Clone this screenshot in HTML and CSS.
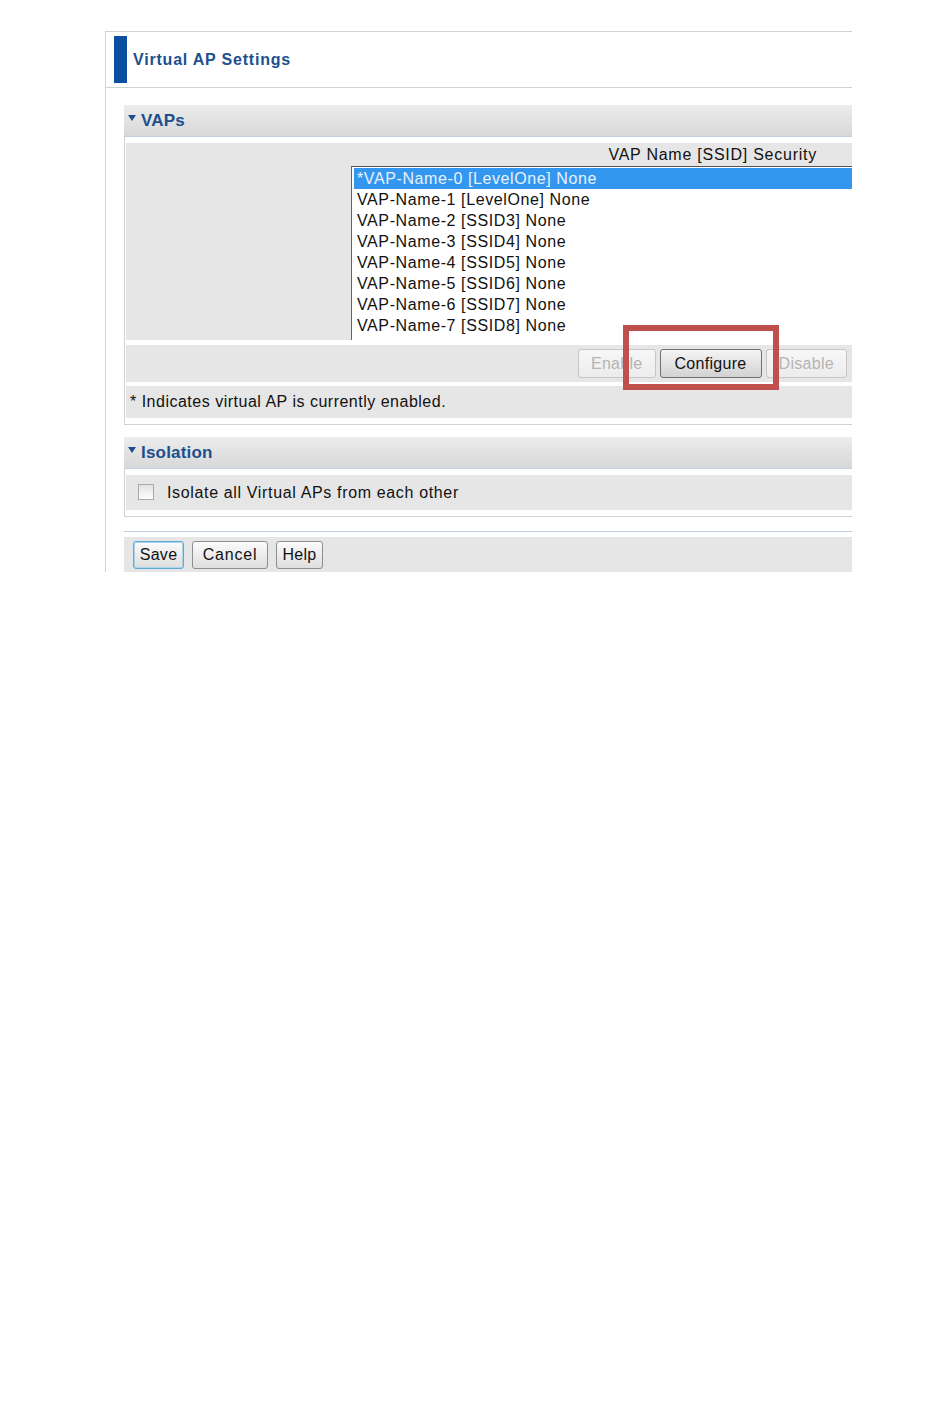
FILE: index.html
```html
<!DOCTYPE html>
<html lang="en">
<head>
    <meta charset="UTF-8">
    <title>Virtual AP Settings</title>
    <link rel="stylesheet" href="styles.css">
</head>
<body>
    <div class="page">
        <div class="frame">
            <div class="page-head">
                <span class="head-bar"></span>
                <h1>Virtual AP Settings</h1>
            </div>

            <div class="content">
                <!-- VAPs -->
                <div class="section">
                    <div class="section-head"><span class="arrow"></span>VAPs</div>
                    <div class="section-body">
                        <div class="vap-row">
                            <div class="vap-spacer"></div>
                            <div class="vap-col">
                                <div class="vap-caption">VAP Name [SSID] Security</div>
                                <ul class="listbox">
                                    <li class="selected">*VAP-Name-0 [LevelOne] None</li>
                                    <li>VAP-Name-1 [LevelOne] None</li>
                                    <li>VAP-Name-2 [SSID3] None</li>
                                    <li>VAP-Name-3 [SSID4] None</li>
                                    <li>VAP-Name-4 [SSID5] None</li>
                                    <li>VAP-Name-5 [SSID6] None</li>
                                    <li>VAP-Name-6 [SSID7] None</li>
                                    <li>VAP-Name-7 [SSID8] None</li>
                                </ul>
                            </div>
                        </div>
                        <div class="btn-strip">
                            <button class="btn" disabled>Enable</button>
                            <button class="btn btn-configure">Configure</button>
                            <button class="btn" disabled>Disable</button>
                        </div>
                        <div class="note">* Indicates virtual AP is currently enabled.</div>
                    </div>
                </div>

                <!-- Isolation -->
                <div class="section">
                    <div class="section-head"><span class="arrow"></span>Isolation</div>
                    <div class="section-body">
                        <label class="check-row">
                            <span class="checkbox"></span>
                            Isolate all Virtual APs from each other
                        </label>
                    </div>
                </div>

                <div class="actions">
                    <button class="btn btn-save">Save</button>
                    <button class="btn btn-cancel">Cancel</button>
                    <button class="btn btn-help">Help</button>
                </div>
            </div>
        </div>
        <div class="highlight"></div>
    </div>
</body>
</html>
```

FILE: styles.css
```css
:root {
    --line: #cdd2d8;
    --strip: #e6e6e6;
    --title-blue: #1d4f8f;
}

body {
    margin: 0;
    background: #fff;
    font-family: "Liberation Sans", Arial, sans-serif;
    color: #111;
}

.page {
    position: relative;
    width: 852px;
    height: 572px;
    padding-top: 31px;
    box-sizing: border-box;
    overflow: hidden;
}

.frame {
    margin-left: 105px;
    height: 100%;
    border-top: 1px solid var(--line);
    border-left: 1px solid var(--line);
}

.page-head {
    display: flex;
    align-items: center;
    height: 55px;
    border-bottom: 1px solid var(--line);
}

.head-bar {
    width: 13px;
    height: 47px;
    margin-left: 8px;
    background: #0c4ea0;
}

.page-head h1 {
    margin: 0 0 0 6px;
    font-size: 16px;
    font-weight: bold;
    color: var(--title-blue);
    letter-spacing: 0.8px;
}

.content {
    padding: 17px 0 0 18px;
}

.section {
    margin-bottom: 12px;
}

.section-head {
    display: flex;
    align-items: center;
    height: 31px;
    padding-left: 4px;
    background: linear-gradient(#ececec, #d8d8d8);
    border-bottom: 1px solid #c4d0dc;
    font-size: 17px;
    font-weight: bold;
    color: var(--title-blue);
    letter-spacing: 0.2px;
}

.arrow {
    width: 0;
    height: 0;
    margin: -6px 5px 0 0;
    border-left: 4px solid transparent;
    border-right: 4px solid transparent;
    border-top: 6px solid #1d4f8f;
}

.section-body {
    border-left: 1px solid var(--line);
    border-bottom: 1px solid var(--line);
    padding: 6px 0 6px 1px;
}

.vap-row {
    display: flex;
    height: 197px;
    background: var(--strip);
    overflow: hidden;
}

.vap-spacer {
    width: 225px;
    flex-shrink: 0;
}

.vap-col {
    flex: 1;
    min-width: 0;
}

.vap-caption {
    height: 23px;
    line-height: 23px;
    text-align: right;
    padding-right: 35px;
    font-size: 16px;
    letter-spacing: 0.75px;
    white-space: nowrap;
}

.listbox {
    list-style: none;
    margin: 0;
    padding: 1px 0 0 2px;
    height: 200px;
    background: #fff;
    border-top: 1px solid #555;
    border-left: 1px solid #666;
    font-size: 16px;
    letter-spacing: 0.6px;
}

.listbox li {
    height: 21px;
    line-height: 21px;
    padding-left: 3px;
}

.listbox li.selected {
    background: #3397f0;
    color: #e8f2ff;
}

.btn-strip {
    display: flex;
    justify-content: flex-end;
    align-items: center;
    gap: 4px;
    height: 37px;
    margin-top: 5px;
    padding-right: 5px;
    background: var(--strip);
}

.btn {
    height: 29px;
    padding: 0 12px;
    font-family: "Liberation Sans", Arial, sans-serif;
    font-size: 16px;
    letter-spacing: 0.3px;
    color: #111;
    background: linear-gradient(#fbfbfb, #dedede);
    border: 1px solid #8e8e8e;
    border-radius: 3px;
}

.btn:disabled {
    color: #b4b4b4;
    border-color: #c6c6c6;
    background: linear-gradient(#f7f7f7, #ececec);
}

.btn-configure {
    width: 102px;
    background: linear-gradient(#f4f4f4, #d2d2d2);
    border-color: #707070;
}

.note {
    height: 32px;
    line-height: 32px;
    margin-top: 4px;
    padding-left: 4px;
    background: var(--strip);
    font-size: 16px;
    letter-spacing: 0.5px;
}

.check-row {
    display: flex;
    align-items: center;
    gap: 13px;
    height: 35px;
    padding-left: 12px;
    background: var(--strip);
    font-size: 16px;
    letter-spacing: 0.65px;
}

.checkbox {
    width: 16px;
    height: 16px;
    margin-top: -2px;
    border: 1px solid #a9a9a9;
    background: linear-gradient(#e2e2e2, #fdfdfd);
    box-sizing: border-box;
}

.actions {
    display: flex;
    align-items: center;
    margin-top: 14px;
    height: 36px;
    padding: 5px 0 0 9px;
    border-top: 1px solid #c4d0dc;
    background: linear-gradient(#fff 5px, var(--strip) 5px);
}

.actions .btn {
    height: 28px;
    padding: 0;
    margin-right: 8px;
}

.actions .btn-save {
    width: 51px;
    border-color: #5fa9d6;
    box-shadow: inset 0 0 0 1px #a9d5ee;
}

.actions .btn-cancel {
    width: 76px;
    letter-spacing: 0.8px;
}

.actions .btn-help {
    width: 47px;
}

/* red annotation box over the buttons */
.highlight {
    position: absolute;
    left: 623px;
    top: 325px;
    width: 156px;
    height: 65px;
    box-sizing: border-box;
    border: 6px solid #c0504d;
}
```
